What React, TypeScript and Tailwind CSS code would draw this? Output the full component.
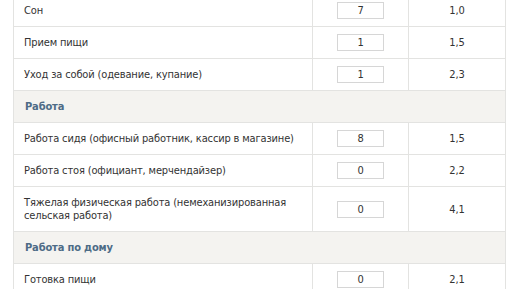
import React from "react";

type Row =
  | { kind: "section"; title: string }
  | { kind: "item"; label: React.ReactNode; hours: number; factor: string; tall?: boolean };

const rows: Row[] = [
  { kind: "item", label: "Сон", hours: 7, factor: "1,0" },
  { kind: "item", label: "Прием пищи", hours: 1, factor: "1,5" },
  { kind: "item", label: "Уход за собой (одевание, купание)", hours: 1, factor: "2,3" },
  { kind: "section", title: "Работа" },
  { kind: "item", label: "Работа сидя (офисный работник, кассир в магазине)", hours: 8, factor: "1,5" },
  { kind: "item", label: "Работа стоя (официант, мерчендайзер)", hours: 0, factor: "2,2" },
  {
    kind: "item",
    label: (
      <>
        Тяжелая физическая работа (немеханизированная
        <br />
        сельская работа)
      </>
    ),
    hours: 0,
    factor: "4,1",
    tall: true,
  },
  { kind: "section", title: "Работа по дому" },
  { kind: "item", label: "Готовка пищи", hours: 0, factor: "2,1" },
];

const font = { fontFamily: '"DejaVu Sans Condensed", "DejaVu Sans", Tahoma, sans-serif' };

export default function App() {
  return (
    <div className="h-[289px] w-[516px] overflow-hidden bg-white" style={font}>
      <div className="-mt-[5px] ml-[13px] w-[493px] border-x border-[#e3e3e1] text-[11px] leading-[13px] tracking-[-0.15px] text-[#333]">
        {rows.map((row, i) =>
          row.kind === "section" ? (
            <div
              key={i}
              className="flex h-[32px] items-center border-b border-[#e3e3e1] bg-[#f4f3f0] pl-[11px] font-bold text-[#4d6b86]"
            >
              {row.title}
            </div>
          ) : (
            <div
              key={i}
              className={`grid grid-cols-[298px_96px_97px] border-b border-[#e3e3e1] ${
                row.tall ? "h-[45px]" : "h-[32px]"
              }`}
            >
              <div className="flex items-center pl-[10px]">{row.label}</div>
              <div className="flex items-center justify-center border-l border-[#e3e3e1]">
                <div className="flex h-[17px] w-[47px] items-center justify-center border border-[#d6d6d6] bg-white">
                  {row.hours}
                </div>
              </div>
              <div className="flex items-center justify-center border-l border-[#e3e3e1]">{row.factor}</div>
            </div>
          )
        )}
      </div>
    </div>
  );
}
